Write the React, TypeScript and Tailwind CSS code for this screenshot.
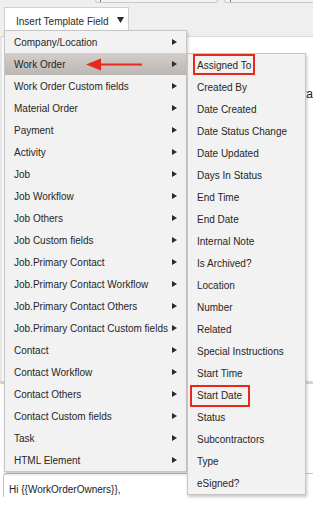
import React from 'react';

const mainItems = [
  'Company/Location',
  'Work Order',
  'Work Order Custom fields',
  'Material Order',
  'Payment',
  'Activity',
  'Job',
  'Job Workflow',
  'Job Others',
  'Job Custom fields',
  'Job.Primary Contact',
  'Job.Primary Contact Workflow',
  'Job.Primary Contact Others',
  'Job.Primary Contact Custom fields',
  'Contact',
  'Contact Workflow',
  'Contact Others',
  'Contact Custom fields',
  'Task',
  'HTML Element',
];

const subItems = [
  'Assigned To',
  'Created By',
  'Date Created',
  'Date Status Change',
  'Date Updated',
  'Days In Status',
  'End Time',
  'End Date',
  'Internal Note',
  'Is Archived?',
  'Location',
  'Number',
  'Related',
  'Special Instructions',
  'Start Time',
  'Start Date',
  'Status',
  'Subcontractors',
  'Type',
  'eSigned?',
];

const Caret: React.FC = () => (
  <svg width="5" height="6" viewBox="0 0 5 6" className="shrink-0">
    <path d="M0 0 L5 3 L0 6 Z" fill="#2a2a2a" />
  </svg>
);

const App: React.FC = () => {
  return (
    <div className="relative w-[313px] h-[505px] overflow-hidden bg-white text-[10px] text-[#262626] font-['Liberation_Sans',Arial,sans-serif]">
      {/* Toolbar */}
      <div className="h-[37px] bg-[#efefef] border-b border-[#dadada]">
        <div className="flex h-[3px] pl-[95px] gap-[6px]">
          <div className="w-[123px] h-[3px] bg-[#f3f3f3] border-x border-b border-[#c9c9c9] rounded-b-[3px] pl-[4px]">
            <div className="w-[1px] h-[2px] bg-[#777]" />
          </div>
          <div className="flex-1 h-[3px] bg-[#f3f3f3] border-l border-b border-[#c9c9c9] rounded-bl-[3px] pl-[5px]">
            <div className="w-[1px] h-[2px] bg-[#777]" />
          </div>
        </div>
        <div className="ml-[4px] mt-[4px] w-[125px] h-[30px] bg-white border border-[#cfcfcf] flex items-start pt-[6px] pl-[11px] gap-[8px]">
          <span className="text-[#2a2a2a]">Insert Template Field</span>
          <svg width="7" height="6" viewBox="0 0 7 6" className="mt-[3px]">
            <path d="M0 0 L7 0 L3.5 6 Z" fill="#2a2a2a" />
          </svg>
        </div>
      </div>

      {/* Editor */}
      <div className="flex h-[344px]">
        <div className="w-[4px] bg-[#e6e6e6]" />
        <div className="flex-1 pt-[50px] pl-[288px] text-[12px] leading-[14px] text-[#222]">data</div>
      </div>
      <div className="h-[3px] bg-[#d6d6d6]" />
      <div className="h-[89px]" />
      <div className="ml-[3px] border-t border-l border-[#c4c4c4] rounded-tl-[4px] pt-[8px] pl-[5px] text-[#222]">
        Hi {'{{WorkOrderOwners}}'},
      </div>

      {/* Main dropdown menu */}
      <div className="absolute left-[4px] top-[30px] w-[183px] bg-[#f2f2f2] border border-[#c6c6c6] shadow-[1px_2px_3px_rgba(0,0,0,0.22)]">
        {mainItems.map((item, i) => (
          <div
            key={item}
            className={
              'h-[22px] flex items-center justify-between pl-[9px] pr-[9px] ' +
              (i === 1 ? 'bg-gradient-to-b from-[#d3cecb] to-[#bdb7b3]' : '')
            }
          >
            <span className="whitespace-nowrap">{item}</span>
            <Caret />
          </div>
        ))}
      </div>

      {/* Submenu */}
      <div className="absolute left-[187px] top-[53px] w-[119px] bg-[#f2f2f2] border border-[#c6c6c6] shadow-[1px_2px_3px_rgba(0,0,0,0.22)]">
        {subItems.map((item) => (
          <div key={item} className="h-[22px] flex items-center pl-[9px]">
            <span className="whitespace-nowrap">{item}</span>
          </div>
        ))}
      </div>

      {/* Annotations */}
      <svg className="absolute left-[84px] top-[57px]" width="60" height="15" viewBox="0 0 60 15">
        <path d="M2 7.5 L17 1.5 L17 13.5 Z" fill="#e8281c" />
        <rect x="15" y="6.5" width="43" height="2" fill="#e8281c" />
      </svg>
      <div className="absolute left-[193px] top-[54px] w-[62px] h-[21px] border-2 border-[#e8281c]" />
      <div className="absolute left-[190px] top-[385px] w-[60px] h-[22px] border-2 border-[#e8281c]" />
    </div>
  );
};

export default App;
